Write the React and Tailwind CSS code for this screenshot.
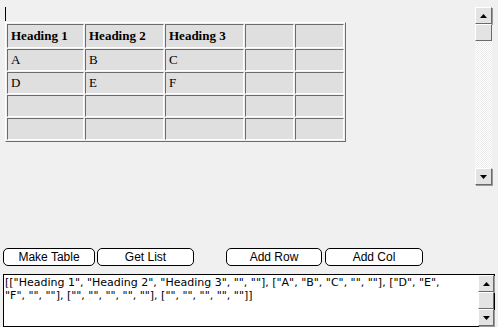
import React from "react";

const headers = ["Heading 1", "Heading 2", "Heading 3", "", ""];
const rows = [
  ["A", "B", "C", "", ""],
  ["D", "E", "F", "", ""],
  ["", "", "", "", ""],
  ["", "", "", "", ""],
];

// little black triangle for the scroll buttons
function Arrow({ down }) {
  return (
    <svg width="7" height="4" viewBox="0 0 7 4" className="block">
      {down ? (
        <polygon points="0,0 7,0 3.5,4" fill="#000" />
      ) : (
        <polygon points="3.5,0 7,4 0,4" fill="#000" />
      )}
    </svg>
  );
}

function ScrollButton({ children }) {
  return (
    <div className="h-[17px] shrink-0 flex items-center justify-center bg-[#e3e3e3] border border-t-white border-l-white border-r-[#6a6a6a] border-b-[#6a6a6a] shadow-[1px_1px_0_#9a9a9a]">
      {children}
    </div>
  );
}

function Scrollbar({ className }) {
  return (
    <div className={"flex flex-col " + className}>
      <ScrollButton>
        <Arrow />
      </ScrollButton>
      <div className="h-[17px] shrink-0 bg-[#e3e3e3] border border-t-white border-l-white border-r-[#6a6a6a] border-b-[#6a6a6a]" />
      <div className="flex-1 bg-[repeating-conic-gradient(#ffffff_0%_25%,#ebebeb_0%_50%)] bg-[length:2px_2px]" />
      <ScrollButton>
        <Arrow down />
      </ScrollButton>
    </div>
  );
}

function Cell({ text, bold }) {
  return (
    <div
      className={
        "flex items-center px-[3px] bg-[#dfdfdf] border border-t-[#6b6b6b] border-l-[#6b6b6b] border-r-white border-b-white text-[13px] text-black font-['Liberation_Serif',serif] " +
        (bold ? "font-bold" : "")
      }
    >
      {text}
    </div>
  );
}

function Btn({ label, className }) {
  return (
    <button
      type="button"
      className={
        "h-[18px] bg-white border border-black rounded-[5px] text-[12px] leading-none text-black font-['Liberation_Sans',Arial,sans-serif] " +
        className
      }
    >
      {label}
    </button>
  );
}

export default function App() {
  return (
    <div className="w-[498px] h-[327px] bg-[#f0f0f0] overflow-hidden flex flex-col">
      {/* grid pane */}
      <div className="flex pt-[7px] h-[185px]">
        <div className="flex-1 pl-[5px]">
          <div className="w-px h-[14px] bg-black" />
          <div className="mt-[1px] w-max p-px border border-t-white border-l-white border-r-[#6b6b6b] border-b-[#6b6b6b]">
            <div className="grid grid-cols-[77px_79px_79px_49px_49px] grid-rows-[24px_22px_22px_22px_22px] gap-px">
              {headers.map((h, i) => (
                <Cell key={"h" + i} text={h} bold />
              ))}
              {rows.map((r, ri) =>
                r.map((c, ci) => <Cell key={ri + "-" + ci} text={c} />)
              )}
            </div>
          </div>
        </div>
        <Scrollbar className="w-[17px] h-[178px] mr-[6px]" />
      </div>

      {/* buttons */}
      <div className="flex mt-[63px] pl-[3px]">
        <Btn label="Make Table" className="w-[92px]" />
        <Btn label="Get List" className="w-[97px] ml-[2px]" />
        <Btn label="Add Row" className="w-[96px] ml-[32px]" />
        <Btn label="Add Col" className="w-[98px] ml-[3px]" />
      </div>

      {/* output text area */}
      <div className="mt-[8px] ml-[3px] w-[492px] h-[53px] bg-white border border-black flex">
        <div className="flex-1 pl-[1px] pt-px text-[11px] leading-[13px] text-black whitespace-pre font-['DejaVu_Sans',sans-serif]">
          {'[["Heading 1", "Heading 2", "Heading 3", "", ""], ["A", "B", "C", "", ""], ["D", "E",\n"F", "", ""], ["", "", "", "", ""], ["", "", "", "", ""]]'}
        </div>
        <Scrollbar className="w-[16px]" />
      </div>
    </div>
  );
}
